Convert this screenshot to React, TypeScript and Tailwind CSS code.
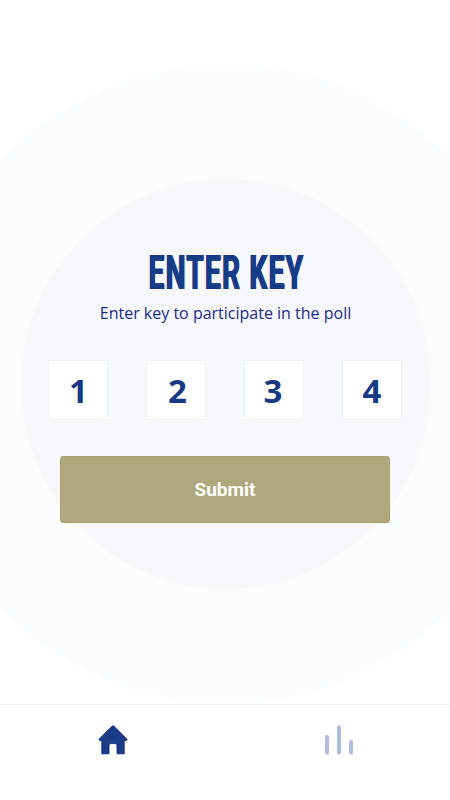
const digits = [
  { value: '1', shift: 'pl-px' },
  { value: '2', shift: 'pl-[3px]' },
  { value: '3', shift: 'pr-0.5' },
  { value: '4', shift: '' },
];

function HomeIcon() {
  return (
    <svg width="30" height="31" viewBox="0 0 30 31" fill="#1b3d87" stroke="#07187f" strokeWidth="0.8" strokeLinejoin="round">
      <path d="M14.2 1.1Q15 .5 15.8 1.1L28.8 14Q29.6 15.3 28.2 15.4H26.2V28.8H19V20.4Q19 18.6 17.2 18.6H12.8Q11 18.6 11 20.4V28.8H3.8V15.4H1.8Q.4 15.3 1.2 14Z" />
    </svg>
  );
}

function BarsIcon() {
  return (
    <svg width="30" height="31" viewBox="0 0 30 31" fill="#b0bddb">
      <rect x="1" y="10" width="4" height="19.5" rx="1.8" />
      <rect x="13" y="0.2" width="4" height="29.3" rx="1.8" />
      <rect x="25" y="15" width="4" height="14.5" rx="1.8" />
    </svg>
  );
}

export default function App() {
  return (
    <div className="relative isolate flex h-[800px] w-[450px] flex-col overflow-hidden bg-white font-['Open_Sans','Noto_Sans',sans-serif]">
      <div className="absolute top-[65px] left-[-93px] -z-10 size-[638px] rounded-full bg-[#fbfcfe]" />
      <div className="absolute top-[179px] left-[21px] -z-10 size-[410px] rounded-full bg-[#f6f8fc]" />
      <main className="flex h-[704px] flex-col items-center pt-[245px]">
        <h1 className="h-[56px] origin-center scale-x-[0.588] pl-[5px] font-['Roboto',sans-serif] text-[48px] leading-[56px] font-bold tracking-[2px] whitespace-nowrap text-[#173b87] [text-shadow:1px_0_#173b87,-1px_0_#173b87]">
          ENTER KEY
        </h1>
        <p className="pl-px text-[16px] leading-6 whitespace-nowrap text-[#1a2a88]">
          Enter key to participate in the poll
        </p>
        <div className="mt-[35px] flex w-[354px] justify-between">
          {digits.map((d) => (
            <div
              key={d.value}
              className={`flex size-[60px] items-center justify-center border border-[#f0f1f4] bg-white text-[33px] leading-none font-bold text-[#173984] ${d.shift}`}
            >
              {d.value}
            </div>
          ))}
        </div>
        <button className="mt-9 h-[67px] w-[330px] rounded-[3px] border border-[#aaa26d] bg-[#afa87d] pt-0.5 font-['Roboto',sans-serif] text-[19px] font-bold text-white">
          Submit
        </button>
      </main>
      <nav className="grid h-24 grid-cols-2 border-t border-[#eeeff5] bg-white pt-[20px]">
        <a className="flex justify-center"><HomeIcon /></a>
        <a className="flex justify-center pl-0.5"><BarsIcon /></a>
      </nav>
    </div>
  );
}
